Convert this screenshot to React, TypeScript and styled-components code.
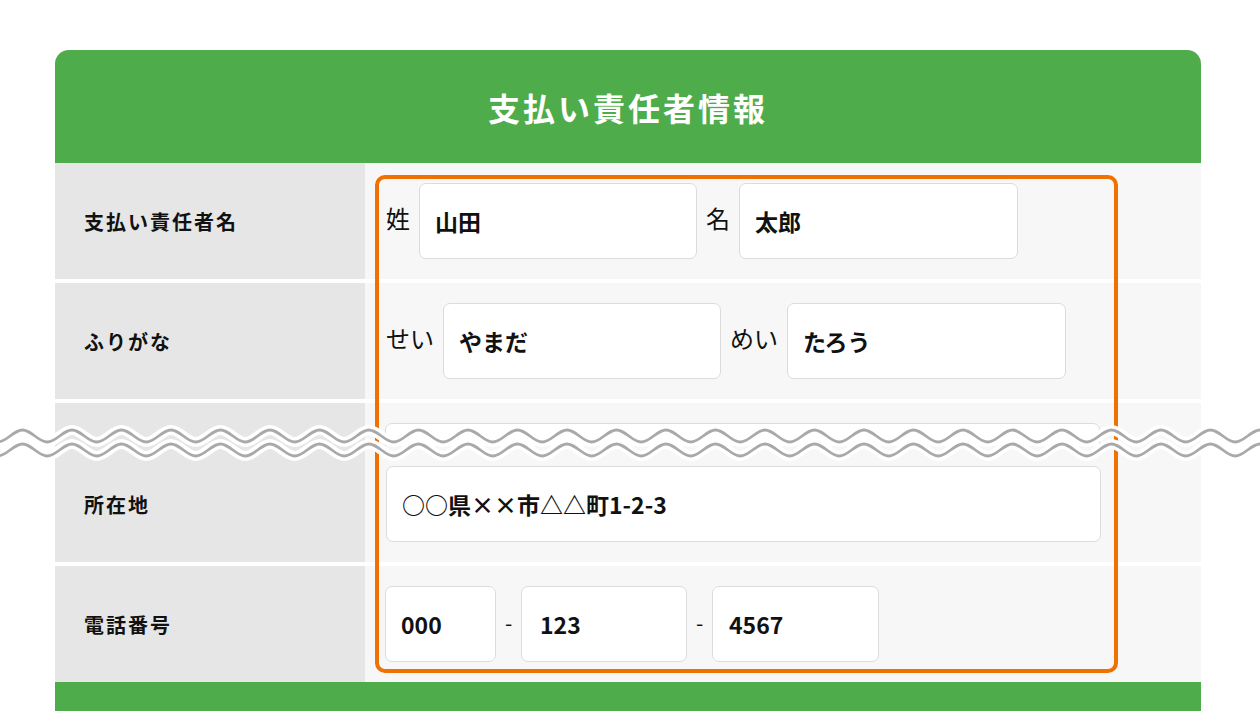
import React from "react"
import styled, { createGlobalStyle } from "styled-components"

const GlobalStyle = createGlobalStyle`
  html, body {
    margin: 0;
    padding: 0;
    background: #ffffff;
    font-family: "Noto Sans CJK JP", "Noto Sans", sans-serif;
    color: #111;
    overflow: hidden;
  }
`

const Page = styled.div`
  position: relative;
  width: 1260px;
  height: 711px;
  overflow: hidden;
  padding-top: 50px;
  box-sizing: border-box;
`

const Card = styled.section`
  width: 1146px;
  margin-left: 55px;
`

const Header = styled.header`
  height: 113px;
  background: #4fac4b;
  border-radius: 14px 14px 0 0;
  display: flex;
  align-items: center;
  justify-content: center;
`

const Title = styled.h1`
  margin: 0;
  color: #fff;
  font-size: 32px;
  font-weight: 700;
  letter-spacing: 3px;
  line-height: 1;
`

const Body = styled.div`
  position: relative;
`

const Row = styled.div<{ $height?: number; $flush?: boolean }>`
  display: grid;
  grid-template-columns: 310px 1fr;
  height: ${(p) => p.$height ?? 116}px;
  margin-bottom: ${(p) => (p.$flush ? 0 : 4)}px;
  overflow: hidden;
`

const LabelCell = styled.div`
  background: #e6e6e6;
  display: flex;
  align-items: center;
  padding-left: 29px;
  font-size: 20px;
  font-weight: 700;
  letter-spacing: 2px;
`

const ValueCell = styled.div<{ $top?: boolean }>`
  background: #f7f7f7;
  display: flex;
  align-items: ${(p) => (p.$top ? "flex-start" : "center")};
  padding: ${(p) => (p.$top ? "20px 0 0 20px" : "0 0 0 21px")};
  gap: 9px;
`

const InlineLabel = styled.span`
  font-size: 24px;
  font-weight: 400;
  line-height: 1;
  margin-top: -6px;
`

const Dash = styled.span`
  font-size: 21px;
  font-weight: 400;
  width: 7px;
  text-align: center;
  margin-top: -4px;
`

const TextBox = styled.input<{ $w: number; $pad?: number }>`
  flex: none;
  width: ${(p) => p.$w}px;
  height: 76px;
  box-sizing: border-box;
  border: 1.5px solid #dcdcdc;
  border-radius: 7px;
  background: #fff;
  padding: 0 0 0 ${(p) => p.$pad ?? 15}px;
  font-family: "Noto Sans CJK JP", "Noto Sans", sans-serif;
  font-size: 23px;
  font-weight: 700;
  color: #111;
  outline: none;
`

const Highlight = styled.div`
  position: absolute;
  left: 320px;
  top: 12px;
  width: 743px;
  height: 498px;
  box-sizing: border-box;
  border: 4px solid #ef7100;
  border-radius: 10px;
  pointer-events: none;
`

const Footer = styled.footer`
  height: 40px;
  background: #4fac4b;
`

const BreakMark = styled.svg`
  position: absolute;
  left: 0;
  top: 413px;
  pointer-events: none;
`

function wavePath(y: number, amp: number, period: number, phase: number, width: number) {
  const h = period / 2
  let x = phase - period * 2
  let up = true
  let d = `M${x},${y - amp}`
  while (x < width + period) {
    const y0 = up ? y - amp : y + amp
    const y1 = up ? y + amp : y - amp
    d += ` C${x + h * 0.36},${y0} ${x + h * 0.64},${y1} ${x + h},${y1}`
    x += h
    up = !up
  }
  return d
}

function PageBreak() {
  const w = 1260
  const p = 49.5
  const c = 72
  const top = wavePath(23, 6, p, c, w)
  const bottom = wavePath(37, 6, p, c, w)
  return (
    <BreakMark width={w} height={56} viewBox={`0 0 ${w} 56`}>
      <path d={top} fill="none" stroke="#fff" strokeWidth={10} />
      <path d={bottom} fill="none" stroke="#fff" strokeWidth={10} />
      <path d={top} fill="none" stroke="#a9a9a9" strokeWidth={2.8} />
      <path d={bottom} fill="none" stroke="#a9a9a9" strokeWidth={2.8} />
    </BreakMark>
  )
}

export default function App() {
  return (
    <Page>
      <GlobalStyle />
      <Card>
        <Header>
          <Title>支払い責任者情報</Title>
        </Header>
        <Body>
          <Row>
            <LabelCell>支払い責任者名</LabelCell>
            <ValueCell>
              <InlineLabel>姓</InlineLabel>
              <TextBox $w={278} readOnly value="山田" />
              <InlineLabel>名</InlineLabel>
              <TextBox $w={279} readOnly value="太郎" />
            </ValueCell>
          </Row>
          <Row>
            <LabelCell>ふりがな</LabelCell>
            <ValueCell>
              <InlineLabel>せい</InlineLabel>
              <TextBox $w={278} readOnly value="やまだ" />
              <InlineLabel>めい</InlineLabel>
              <TextBox $w={279} readOnly value="たろう" />
            </ValueCell>
          </Row>
          <Row $height={43} $flush>
            <LabelCell />
            <ValueCell $top>
              <TextBox $w={715} readOnly value="" />
            </ValueCell>
          </Row>
          <Row>
            <LabelCell>所在地</LabelCell>
            <ValueCell>
              <TextBox $w={715} readOnly value="○○県××市△△町1-2-3" />
            </ValueCell>
          </Row>
          <Row $flush>
            <LabelCell>電話番号</LabelCell>
            <ValueCell style={{ paddingLeft: 20 }}>
              <TextBox $w={111} readOnly value="000" />
              <Dash>-</Dash>
              <TextBox $w={166} $pad={18} readOnly value="123" />
              <Dash>-</Dash>
              <TextBox $w={167} $pad={16} readOnly value="4567" />
            </ValueCell>
          </Row>
          <Highlight />
        </Body>
        <Footer />
      </Card>
      <PageBreak />
    </Page>
  )
}
